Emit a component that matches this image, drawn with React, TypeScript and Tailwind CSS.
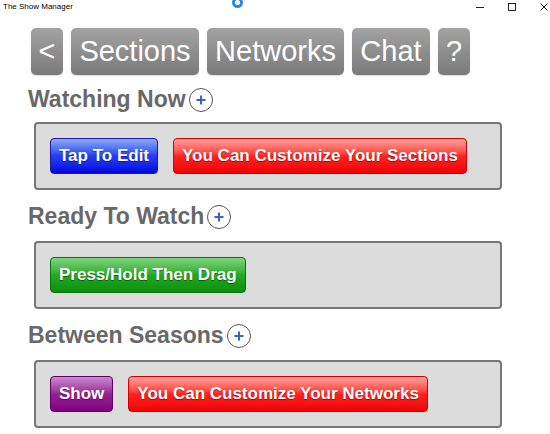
import React from "react";

const font = { fontFamily: '"Liberation Sans", Arial, sans-serif' };

function NavButton({ label, w }: { label: string; w: string }) {
  return (
    <div
      className={`${w} h-[47px] rounded-[5px] flex items-center justify-center text-white text-[29px] leading-none bg-gradient-to-b from-[#a3a3a3] to-[#7a7a7a] shadow-[0_1px_1px_rgba(0,0,0,0.15)]`}
    >
      {label}
    </div>
  );
}

function PlusCircle() {
  return (
    <div className="w-[24px] h-[24px] rounded-full border-[1.5px] border-[#555] flex items-center justify-center">
      <svg width="12" height="12" viewBox="0 0 12 12">
        <path d="M6 1.5v9M1.5 6h9" stroke="#3a62c8" strokeWidth="2" />
      </svg>
    </div>
  );
}

function Heading({ text, cls }: { text: string; cls: string }) {
  return (
    <div className={`ml-[28px] h-[25px] flex items-center gap-[3px] ${cls}`}>
      <span className="text-[23px] leading-[25px] font-bold text-[#686868]">{text}</span>
      <PlusCircle />
    </div>
  );
}

function Btn({ label, cls }: { label: string; cls: string }) {
  return (
    <div
      className={`h-[36px] px-[8px] rounded-[4px] border flex items-center text-white font-bold text-[17px] whitespace-nowrap [text-shadow:0_1px_1px_rgba(0,0,0,0.45)] ${cls}`}
    >
      {label}
    </div>
  );
}

function Panel({ children }: { children: React.ReactNode }) {
  return (
    <div className="ml-[34px] w-[468px] h-[68px] rounded-[4px] border-2 border-[#777] bg-[#dcdcdc] flex items-center pl-[14px] gap-[15px]">
      {children}
    </div>
  );
}

const red = "bg-gradient-to-b from-[#ff9c9c] via-[#ff2020] to-[#f00000] border-[#d00000]";

export default function App() {
  return (
    <div className="w-[550px] h-[434px] bg-white overflow-hidden" style={font}>
      <div className="relative h-[28px]">
        <div className="absolute left-[3px] top-[2px] text-[8px] leading-[10px] text-black">
          The Show Manager
        </div>
        <div className="absolute left-[232px] top-[-3px] w-[11px] h-[11px] rounded-full border-[3px] border-[#2f86e0]" />
        <div className="absolute right-[2px] top-[3px] flex gap-[24px]">
          <svg width="8" height="8" viewBox="0 0 8 8">
            <path d="M0 4.5h8" stroke="#222" strokeWidth="1" />
          </svg>
          <svg width="8" height="8" viewBox="0 0 8 8">
            <rect x="0.5" y="0.5" width="7" height="7" fill="none" stroke="#222" strokeWidth="1" />
          </svg>
          <svg width="8" height="8" viewBox="0 0 8 8">
            <path d="M0.5 0.5l7 7M7.5 0.5l-7 7" stroke="#222" strokeWidth="1" />
          </svg>
        </div>
      </div>

      <div className="ml-[31px] flex gap-[8px]">
        <NavButton label="<" w="w-[32px]" />
        <NavButton label="Sections" w="w-[128px]" />
        <NavButton label="Networks" w="w-[137px]" />
        <NavButton label="Chat" w="w-[78px]" />
        <NavButton label="?" w="w-[32px]" />
      </div>

      <Heading text="Watching Now" cls="mt-[12px] mb-[10px]" />
      <Panel>
        <Btn label="Tap To Edit" cls="bg-gradient-to-b from-[#8fa8f5] via-[#2a3af0] to-[#0000e0] border-[#1a1aa0]" />
        <Btn label="You Can Customize Your Sections" cls={red} />
      </Panel>

      <Heading text="Ready To Watch" cls="mt-[14px] mb-[12px]" />
      <Panel>
        <Btn label="Press/Hold Then Drag" cls="bg-gradient-to-b from-[#7fd67f] via-[#22a822] to-[#0c900c] border-[#0a700a]" />
      </Panel>

      <Heading text="Between Seasons" cls="mt-[14px] mb-[12px]" />
      <Panel>
        <Btn label="Show" cls="bg-gradient-to-b from-[#c98ad0] via-[#952095] to-[#800080] border-[#600060]" />
        <Btn label="You Can Customize Your Networks" cls={red} />
      </Panel>
    </div>
  );
}
